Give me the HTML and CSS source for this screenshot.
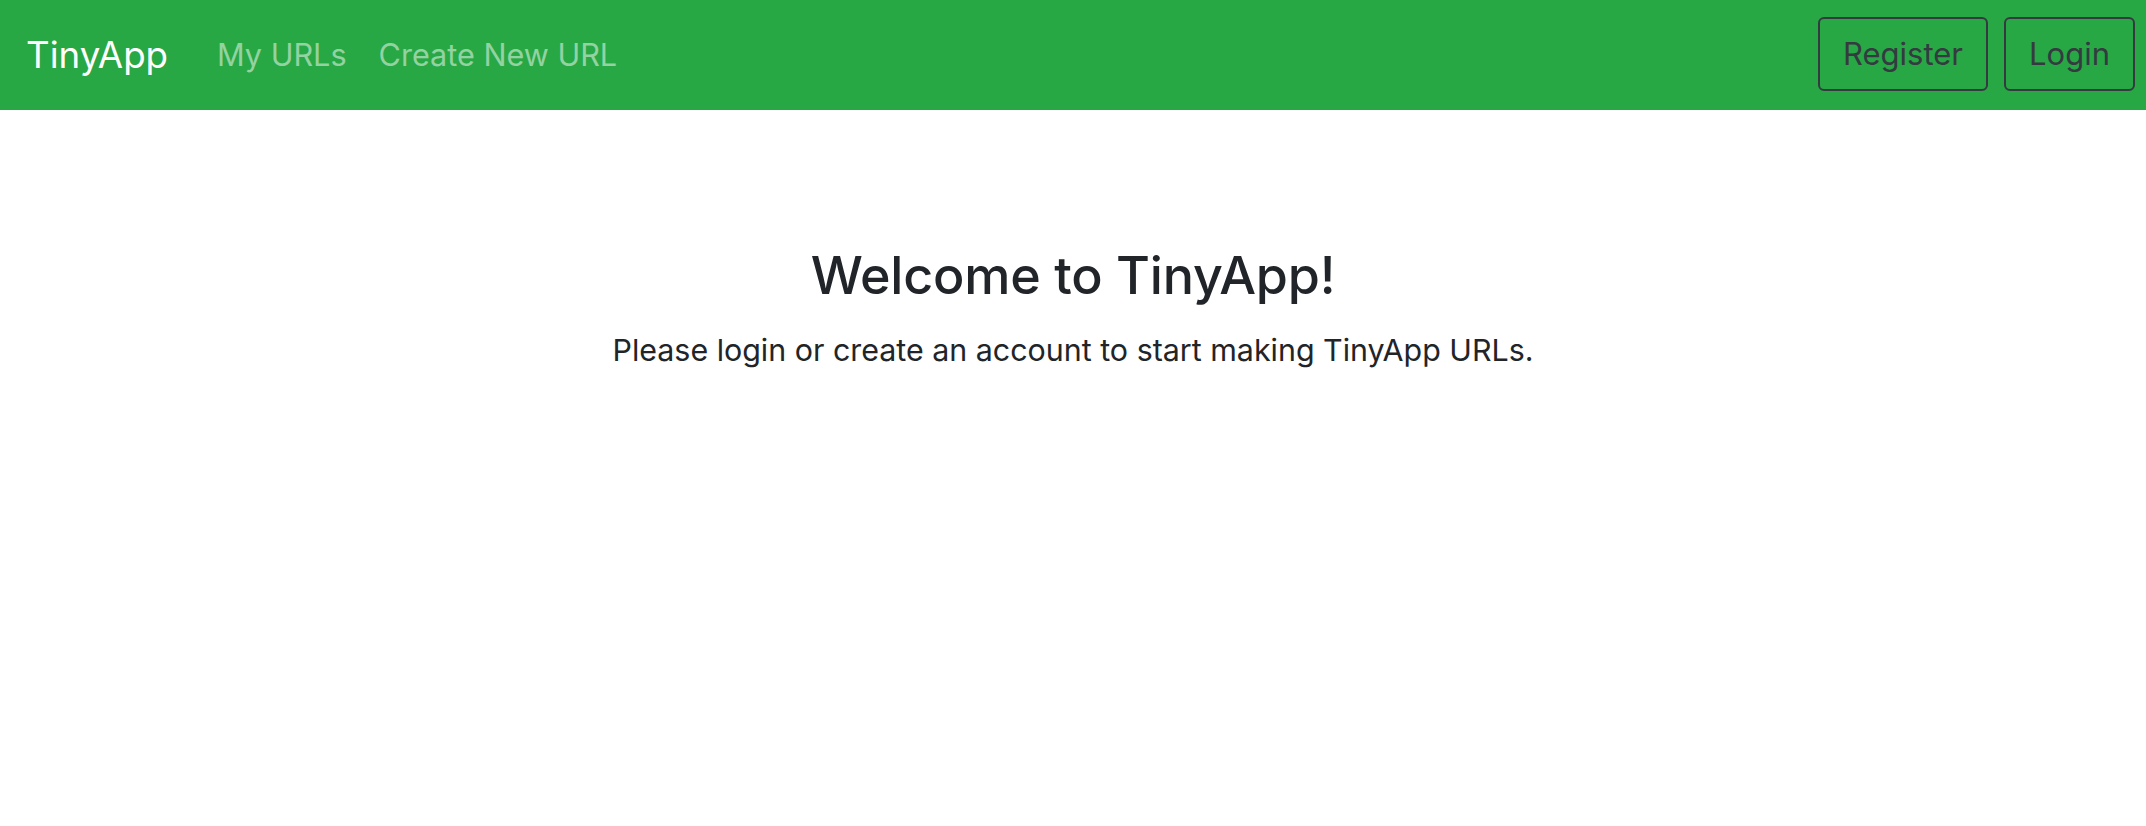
FILE: index.html
```html
<!DOCTYPE html>
<html lang="en">
<head>
<meta charset="utf-8">
<title>TinyApp</title>
<link rel="stylesheet" href="styles.css">
</head>
<body>
<nav class="navbar">
  <a class="brand" href="#">TinyApp</a>
  <ul class="nav-links">
    <li><a class="nav-link" href="#">My URLs</a></li>
    <li><a class="nav-link" href="#">Create New URL</a></li>
  </ul>
  <div class="nav-actions">
    <a class="btn" href="#">Register</a>
    <a class="btn" href="#">Login</a>
  </div>
</nav>
<main class="welcome">
  <h1 class="title">Welcome to TinyApp!</h1>
  <p class="lead">Please login or create an account to start making TinyApp URLs.</p>
</main>
</body>
</html>
```
FILE: styles.css
```css
* { box-sizing: border-box; }
html, body { margin: 0; padding: 0; }
body {
  font-family: Inter, "Noto Sans", "Liberation Sans", sans-serif;
  color: #212529;
  background: #fff;
}
a { text-decoration: none; }

.navbar {
  height: 110px;
  background: #28a745;
  display: flex;
  align-items: center;
  padding: 0 11px 3px 26px;
}
.brand {
  color: #fff;
  font-size: 36.7px;
  line-height: 1.5;
  padding-top: 3px;
  margin-right: 33px;
}
.nav-links {
  list-style: none;
  margin: 0;
  padding: 2px 0 0;
  display: flex;
  flex: 1;
}
.nav-link {
  display: block;
  color: rgba(255, 255, 255, 0.5);
  font-size: 30.6px;
  line-height: 1.5;
  padding: 0 16px;
}
.nav-actions {
  display: flex;
  gap: 16px;
}
.btn {
  display: inline-block;
  font-size: 31px;
  line-height: 46px;
  padding: 12px 23px;
  border: 2px solid #343a40;
  border-radius: 6px;
  color: #343a40;
}

.welcome {
  text-align: center;
  padding-top: 135px;
}
.title {
  font-size: 52px;
  font-weight: 500;
  line-height: 1.2;
  letter-spacing: -0.2px;
  margin: 0 0 21px;
}
.lead {
  font-size: 30.4px;
  line-height: 1.5;
  margin: 0;
}
```
